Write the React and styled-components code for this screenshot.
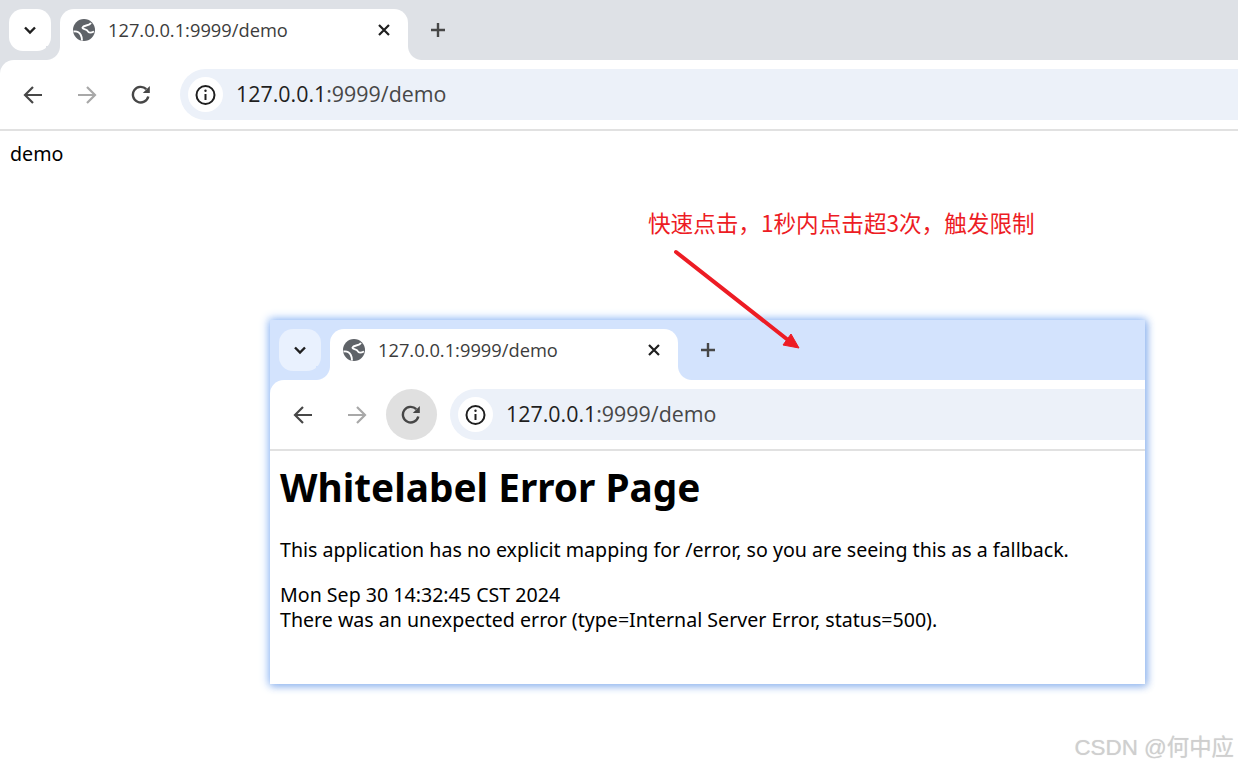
import React from 'react';
import styled, { createGlobalStyle } from 'styled-components';

const GlobalStyle = createGlobalStyle`
  html, body { margin: 0; padding: 0; background: #fff; }
  body { width: 1238px; height: 767px; overflow: hidden; position: relative; }
`;

const uiFont = `"Open Sans", "Noto Sans", sans-serif`;
const pageFont = `"Noto Sans", "Noto Sans CJK SC", sans-serif`;

const Browser = ({ strip, chevron, activeReload }) => (
  <>
    <TabStrip $bg={strip}>
      <TabSearch $bg={chevron}>
        <svg width="14" height="14" viewBox="0 0 14 14">
          <path d="M2 4.500 L7 9.500 L12 4.500" fill="none" stroke="#1f1f1f" strokeWidth="2.400" />
        </svg>
      </TabSearch>
      <Tab $bg={strip}>
        <svg width="24" height="24" viewBox="0 0 24 24">
          <circle cx="12" cy="12" r="11" fill="#5f6368" />
          <path d="M19 5 C17 8 11.500 7 10.500 9.500 C10 11.500 15 10.500 16 13.500 C16.500 15 19 15 22 13.500" fill="none" stroke="#fff" strokeWidth="1.900" />
          <path d="M1.500 13.500 C5 13 7.500 14.500 8.800 17 C9.600 18.500 10 20 10 22.500" fill="none" stroke="#fff" strokeWidth="1.900" />
        </svg>
        <TabTitle>127.0.0.1:9999/demo</TabTitle>
        <TabClose>
          <svg width="14" height="14" viewBox="0 0 14 14">
            <path d="M2 2 L12 12 M12 2 L2 12" stroke="#1f1f1f" strokeWidth="2.200" />
          </svg>
        </TabClose>
      </Tab>
      <NewTab>
        <svg width="18" height="18" viewBox="0 0 18 18">
          <path d="M9 2 V16 M2 9 H16" stroke="#474747" strokeWidth="2.400" />
        </svg>
      </NewTab>
    </TabStrip>
    <ToolbarBack $bg={strip}>
      <Toolbar>
        <NavButton>
          <svg width="22" height="22" viewBox="0 0 22 22">
            <path d="M20 11 H3 M11 3 L3 11 L11 19" fill="none" stroke="#474747" strokeWidth="2.200" />
          </svg>
        </NavButton>
        <NavButton>
          <svg width="22" height="22" viewBox="0 0 22 22">
            <path d="M2 11 H19 M11 3 L19 11 L11 19" fill="none" stroke="#a8a8a8" strokeWidth="2.200" />
          </svg>
        </NavButton>
        <NavButton $active={activeReload}>
          <svg width="22" height="22" viewBox="0.700 0 22 22">
            <path d="M18 12.500 A7.800 7.800 0 1 1 16 5.200" fill="none" stroke="#474747" strokeWidth="2.400" />
            <path d="M19.500 2 V9 H12.500 Z" fill="#474747" />
          </svg>
        </NavButton>
        <AddressBar>
          <InfoChip>
            <svg width="22" height="22" viewBox="0.500 0 22 22">
              <circle cx="11" cy="11" r="9" fill="none" stroke="#1f1f1f" strokeWidth="2" />
              <path d="M11 10 V16" stroke="#1f1f1f" strokeWidth="2" />
              <circle cx="11" cy="6.800" r="1.200" fill="#1f1f1f" />
            </svg>
          </InfoChip>
          <Url>127.0.0.1<UrlRest>:9999/demo</UrlRest></Url>
        </AddressBar>
      </Toolbar>
    </ToolbarBack>
  </>
);

export default function App() {
  return (
    <Page>
      <GlobalStyle />
      <Browser strip="#dee1e6" chevron="#fff" />
      <DemoText>demo</DemoText>

      <Note>快速点击，1秒内点击超3次，触发限制</Note>

      <Window>
        <Browser strip="#d3e3fd" chevron="#e9f1fe" activeReload />
        <ErrorBody>
          <ErrorTitle>Whitelabel Error Page</ErrorTitle>
          <ErrorText>This application has no explicit mapping for /error, so you are seeing this as a fallback.</ErrorText>
          <ErrorText $gap>
            Mon Sep 30 14:32:45 CST 2024
            <br />
            There was an unexpected error (type=Internal Server Error, status=500).
          </ErrorText>
        </ErrorBody>
      </Window>

      <Arrow width="140" height="115" viewBox="0 0 140 115">
        <path d="M6 7 L118 95" stroke="#ed1c24" strokeWidth="4" strokeLinecap="round" />
        <path d="M129 103 L113 100 L121 89 Z" fill="#ed1c24" stroke="#ed1c24" strokeWidth="1" />
      </Arrow>

      <Watermark>CSDN @何中应</Watermark>
    </Page>
  );
}

const Page = styled.div`
  position: relative;
  width: 1238px;
  height: 767px;
  background: #fff;
  overflow: hidden;
`;

const TabStrip = styled.div`
  display: flex;
  align-items: flex-start;
  height: 60px;
  padding: 9px 0 0 9px;
  box-sizing: border-box;
  background: ${p => p.$bg};
`;

const TabSearch = styled.div`
  display: flex;
  align-items: center;
  justify-content: center;
  width: 42px;
  height: 42px;
  border-radius: 14px;
  background: ${p => p.$bg};
`;

const Tab = styled.div`
  position: relative;
  display: flex;
  align-items: center;
  width: 348px;
  height: 51px;
  margin-left: 9px;
  padding: 0 17px 9px 12px;
  box-sizing: border-box;
  background: #fff;
  border-radius: 14px 14px 0 0;

  &::before,
  &::after {
    content: '';
    position: absolute;
    bottom: 0;
    width: 14px;
    height: 14px;
  }
  &::before {
    left: -14px;
    background: radial-gradient(circle at 0 0, ${p => p.$bg} 13.500px, #fff 14.500px);
  }
  &::after {
    right: -14px;
    background: radial-gradient(circle at 100% 0, ${p => p.$bg} 13.500px, #fff 14.500px);
  }
`;

const TabTitle = styled.span`
  flex: 1;
  margin-left: 12px;
  font: 18.300px/24px ${uiFont};
  color: #3c3c3c;
  white-space: nowrap;
`;

const TabClose = styled.div`
  display: flex;
`;

const NewTab = styled.div`
  display: flex;
  margin: 12px 0 0 21px;
`;

const ToolbarBack = styled.div`
  background: ${p => p.$bg};
`;

const Toolbar = styled.div`
  display: flex;
  align-items: center;
  height: 71px;
  padding-left: 7px;
  box-sizing: border-box;
  background: #fff;
  border-bottom: 2px solid #e1e1e1;
  border-radius: 14px 0 0 0;
`;

const NavButton = styled.div`
  display: flex;
  align-items: center;
  justify-content: center;
  flex: none;
  width: 51px;
  height: 51px;
  margin-right: 3px;
  border-radius: 50%;
  background: ${p => (p.$active ? '#e0e0e0' : 'transparent')};

  &:nth-child(2) {
    margin-right: 4px;
  }
`;

const AddressBar = styled.div`
  flex: 1;
  display: flex;
  align-items: center;
  height: 51px;
  margin-left: 10px;
  padding-left: 8px;
  background: #ecf1f9;
  border-radius: 26px 0 0 26px;
`;

const InfoChip = styled.div`
  display: flex;
  align-items: center;
  justify-content: center;
  width: 35px;
  height: 35px;
  border-radius: 50%;
  background: #fff;
`;

const Url = styled.span`
  margin: 0 0 2px 13px;
  font: 21.400px/28px ${uiFont};
  color: #1f1f1f;
  white-space: nowrap;
`;

const UrlRest = styled.span`
  color: #474747;
`;

const DemoText = styled.div`
  margin: 9px 0 0 10px;
  font: 19.650px/28px ${pageFont};
  color: #000;
`;

const Note = styled.div`
  position: absolute;
  left: 648px;
  top: 207px;
  font: 22.600px/32px "Noto Sans CJK SC", "Noto Sans", sans-serif;
  color: #ed1c24;
  white-space: nowrap;
`;

const Window = styled.div`
  position: absolute;
  left: 270px;
  top: 320px;
  width: 875px;
  height: 364px;
  background: #fff;
  box-shadow: 0 0 9px 1px #8db8fa, 2px 2px 7px rgba(60, 100, 170, 0.35);
`;

const ErrorBody = styled.div`
  padding: 10px 10px 0;
  font-family: ${pageFont};
  color: #000;
`;

const ErrorTitle = styled.h1`
  margin: 0 0 24px;
  font-size: 38.750px;
  line-height: 52px;
  font-weight: 700;
`;

const ErrorText = styled.p`
  margin: ${p => (p.$gap ? '20px' : '0')} 0 0;
  font-size: 19.600px;
  line-height: 25px;
`;

const Arrow = styled.svg`
  position: absolute;
  left: 670px;
  top: 245px;
`;

const Watermark = styled.div`
  position: absolute;
  right: 4px;
  top: 732px;
  font: 22.400px/32px "Liberation Sans", "Noto Sans CJK SC", sans-serif;
  color: #cfcfcf;
  text-shadow: 0 0 1px #ddd;
  white-space: nowrap;
`;
